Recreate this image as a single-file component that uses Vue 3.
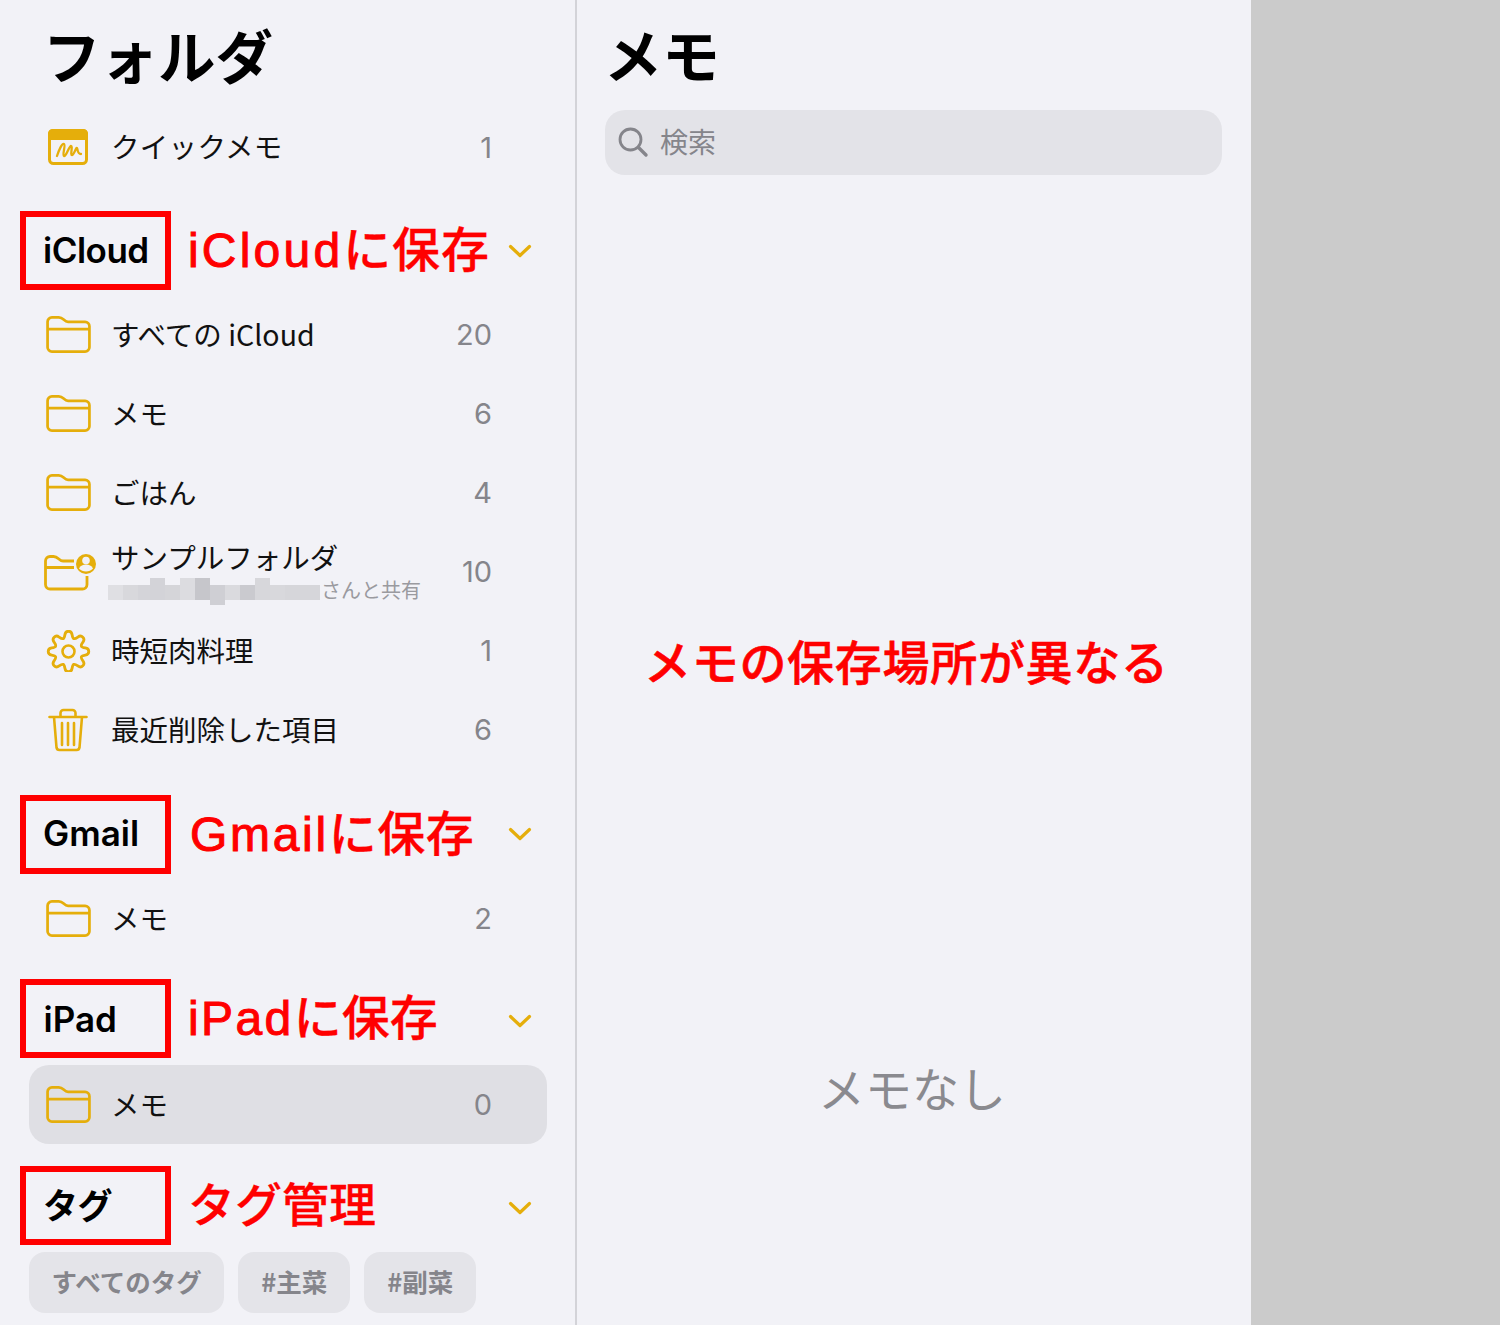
<script setup>
const mosaic = [
  [15,'#dfdfe3',0,0],[15,'#d8d8dc',0,0],[12,'#d4d4d9',0,0],[15,'#d3d3d8',7,0],[15,'#d5d5d9',0,0],[15,'#dcdce0',7,0],[15,'#c6c6cb',7,0],
  [15,'#cfcfd4',0,5],[15,'#dadade',0,0],[15,'#cacacf',0,0],[15,'#d7d7db',7,0],[15,'#d8d8dc',0,0],[15,'#d6d6da',0,0],[20,'#d6d6da',0,0]
]
const icloud = [
  { icon: 'folder', name: 'すべての iCloud', count: 20 },
  { icon: 'folder', name: 'メモ', count: 6 },
  { icon: 'folder', name: 'ごはん', count: 4 },
  { icon: 'shared', name: 'サンプルフォルダ', count: 10, sub: 'さんと共有' },
  { icon: 'gear', name: '時短肉料理', count: 1 },
  { icon: 'trash', name: '最近削除した項目', count: 6 }
]
const folderPath = 'M1.5 6A4.500 4.500 0 0 1 6 1.500h7c2.500 0 3.500.8 5 2.200 1.500 1.400 2.500 2.300 4.500 2.300H40a4.500 4.500 0 0 1 4.500 4.500V32a4.500 4.500 0 0 1-4.500 4.500H6A4.500 4.500 0 0 1 1.500 32zM1.500 13.500h43'

function gearPath() {
  const cx = 22.5, cy = 21.5, outer = 20.5, inner = 14
  const pts = []
  for (let i = 0; i < 8; i++) {
    const a = (i * Math.PI) / 4 - Math.PI / 2
    const steps = [[-0.3, inner], [-0.15, outer], [0.15, outer], [0.3, inner]]
    for (const [d, r] of steps) {
      pts.push([cx + r * Math.cos(a + d), cy + r * Math.sin(a + d)])
    }
  }
  const mid = (p, q) => [(p[0] + q[0]) / 2, (p[1] + q[1]) / 2]
  const f = (n) => n.toFixed(2)
  const start = mid(pts[pts.length - 1], pts[0])
  let d = `M${f(start[0])} ${f(start[1])}`
  pts.forEach((p, i) => {
    const m = mid(p, pts[(i + 1) % pts.length])
    d += `Q${f(p[0])} ${f(p[1])} ${f(m[0])} ${f(m[1])}`
  })
  return d + 'Z'
}
const gear = gearPath()
</script>

<template>
  <div class="screen">
    <aside class="sidebar">
      <h1 class="title">フォルダ</h1>
      <div class="row quick">
        <svg class="icon" viewBox="0 0 46 40" width="46" height="40">
          <rect x="3.500" y="2.500" width="37" height="33" rx="4" fill="none" stroke="#e5ae0b" stroke-width="3"/>
          <path d="M2 5.500A4.500 4.500 0 0 1 6.500 1h31A4.500 4.500 0 0 1 42 5.500V12H2z" fill="#e5ae0b"/>
          <path d="M11 28C13 22 16 15 18 16c2 1-2 11 0 12s5-10 7-10-1 9 1 9 4-8 5-7 0 6 4 6" fill="none" stroke="#e5ae0b" stroke-width="2.300" stroke-linecap="round" stroke-linejoin="round"/>
        </svg>
        <span class="name">クイックメモ</span>
        <span class="count">1</span>
      </div>

      <div class="section first">
        <div class="box">iCloud</div>
        <span class="note"><span class="latin">iCloud</span>に保存</span>
        <svg class="chev" viewBox="0 0 24 14" width="24" height="14"><path d="M2.5 2.5 12 11.5 21.500 2.500" fill="none" stroke="#e5ae0b" stroke-width="3.200" stroke-linecap="round" stroke-linejoin="round"/></svg>
      </div>
      <div class="rows">
        <div v-for="r in icloud" :key="r.name" class="row">
          <svg v-if="r.icon === 'folder'" class="icon folder" viewBox="0 0 46 38" width="45" height="37">
            <path :d="folderPath" fill="none" stroke="#e5ae0b" stroke-width="2.800" stroke-linejoin="round"/>
          </svg>
          <svg v-else-if="r.icon === 'shared'" class="icon shared" viewBox="0 0 54 40" width="54" height="40">
            <path d="M30 9H19c-2 0-3-.9-4.500-2.300C13 5.300 12 4.500 9.500 4.500H6A4.500 4.500 0 0 0 1.500 9v23.500A4.500 4.500 0 0 0 6 37h32.500a4.500 4.500 0 0 0 4.500-4.500V24M1.500 15.500H30" fill="none" stroke="#e5ae0b" stroke-width="2.800" stroke-linejoin="round"/>
            <circle cx="42" cy="12" r="10" fill="#e5ae0b"/>
            <circle cx="42" cy="8.500" r="3.800" fill="#f2f2f7"/>
            <path d="M35 16.500c1.500-3 4-4 7-4s5.500 1 7 4c-1.700 2-4.300 3-7 3s-5.300-1-7-3z" fill="#f2f2f7"/>
          </svg>
          <svg v-else-if="r.icon === 'gear'" class="icon" viewBox="0 0 46 42" width="46" height="42">
            <path :d="gear" fill="none" stroke="#e5ae0b" stroke-width="2.800" stroke-linejoin="round"/>
            <circle cx="22.500" cy="21.500" r="6" fill="none" stroke="#e5ae0b" stroke-width="2.600"/>
          </svg>
          <svg v-else class="icon" viewBox="0 0 46 44" width="46" height="44">
            <path d="M3.500 9h37M14.500 9V5a3 3 0 0 1 3-3h9a3 3 0 0 1 3 3v4M8 9l2.500 30.500a3 3 0 0 0 3 2.500h17a3 3 0 0 0 3-2.500L36 9M16 15v22M22 15v22M28 15v22" fill="none" stroke="#e5ae0b" stroke-width="2.600" stroke-linecap="round" stroke-linejoin="round"/>
          </svg>
          <div v-if="r.sub" class="stack">
            <span class="name">{{ r.name }}</span>
            <span class="subline">
              <span class="mosaic">
                <i v-for="(m, i) in mosaic" :key="i" :style="{ width: m[0] + 'px', background: m[1], marginTop: -m[2] + 'px', marginBottom: -m[3] + 'px' }"></i>
              </span>
              <span class="sub">{{ r.sub }}</span>
            </span>
          </div>
          <span v-else class="name">{{ r.name }}</span>
          <span class="count">{{ r.count }}</span>
        </div>
      </div>

      <div class="section gmail">
        <div class="box">Gmail</div>
        <span class="note wide"><span class="latin">Gmail</span>に保存</span>
        <svg class="chev" viewBox="0 0 24 14" width="24" height="14"><path d="M2.5 2.5 12 11.5 21.500 2.500" fill="none" stroke="#e5ae0b" stroke-width="3.200" stroke-linecap="round" stroke-linejoin="round"/></svg>
      </div>
      <div class="row">
        <svg class="icon folder" viewBox="0 0 46 38" width="45" height="37">
          <path :d="folderPath" fill="none" stroke="#e5ae0b" stroke-width="2.800" stroke-linejoin="round"/>
        </svg>
        <span class="name">メモ</span>
        <span class="count">2</span>
      </div>

      <div class="section ipad">
        <div class="box">iPad</div>
        <span class="note"><span class="latin">iPad</span>に保存</span>
        <svg class="chev" viewBox="0 0 24 14" width="24" height="14"><path d="M2.5 2.5 12 11.5 21.500 2.500" fill="none" stroke="#e5ae0b" stroke-width="3.200" stroke-linecap="round" stroke-linejoin="round"/></svg>
      </div>
      <div class="row selected">
        <svg class="icon folder" viewBox="0 0 46 38" width="45" height="37">
          <path :d="folderPath" fill="none" stroke="#e5ae0b" stroke-width="2.800" stroke-linejoin="round"/>
        </svg>
        <span class="name">メモ</span>
        <span class="count">0</span>
      </div>

      <div class="section tag">
        <div class="box">タグ</div>
        <span class="note tagnote">タグ管理</span>
        <svg class="chev" viewBox="0 0 24 14" width="24" height="14"><path d="M2.5 2.5 12 11.5 21.500 2.500" fill="none" stroke="#e5ae0b" stroke-width="3.200" stroke-linecap="round" stroke-linejoin="round"/></svg>
      </div>
      <div class="tags">
        <span class="chip">すべてのタグ</span>
        <span class="chip">#主菜</span>
        <span class="chip">#副菜</span>
      </div>
    </aside>

    <main class="notes">
      <h2 class="heading">メモ</h2>
      <div class="search">
        <svg viewBox="0 0 32 32" width="32" height="32"><circle cx="13.500" cy="13.500" r="10.500" fill="none" stroke="#85858b" stroke-width="2.800"/><path d="M21.500 21.500 29 29" stroke="#85858b" stroke-width="3.400" stroke-linecap="round"/></svg>
        <span class="hint">検索</span>
      </div>
      <p class="diff">メモの保存場所が異なる</p>
      <p class="empty">メモなし</p>
    </main>

    <div class="rest"></div>
  </div>
</template>

<style scoped>
.screen {
  display: flex;
  width: 1500px;
  height: 1325px;
  overflow: hidden;
  background: #f2f2f7;
  font-family: "Inter", "Noto Sans CJK JP", sans-serif;
  color: #000;
}
.sidebar {
  width: 575px;
  height: 1325px;
  flex: none;
  display: flex;
  flex-direction: column;
  overflow: hidden;
}
.title {
  margin: 0;
  height: 108px;
  padding: 12px 0 0 43px;
  box-sizing: border-box;
  font: 700 57.500px/84px "Noto Sans CJK JP", sans-serif;
}
.rows {
  display: flex;
  flex-direction: column;
}
.row {
  height: 79px;
  flex: none;
  display: flex;
  align-items: center;
  margin: 0 28px 0 29px;
  padding: 0 55px 0 17px;
  box-sizing: border-box;
}
.icon {
  flex: none;
  width: 46px;
  margin-right: 19px;
}
.icon.folder {
  width: 45px;
  margin-right: 20px;
}
.icon.shared {
  width: 54px;
  margin-left: -2px;
  margin-right: 13px;
  overflow: visible;
}
.name {
  flex: 1;
  margin-top: -2px;
  font: 400 28.500px/36px "Noto Sans CJK JP", sans-serif;
  color: #111;
  white-space: nowrap;
}
.quick .name {
  margin-top: -3px;
  letter-spacing: 0.3px;
}
.count {
  font: 400 29px/36px "Inter", sans-serif;
  color: #85858b;
}
.stack {
  flex: 1;
  display: flex;
  flex-direction: column;
  margin-top: -3px;
}
.stack .name {
  flex: none;
  margin-top: 0;
  line-height: 36px;
}
.subline {
  display: flex;
  align-items: center;
  margin: 3px 0 0 -3px;
  height: 24px;
}
.mosaic {
  display: flex;
  width: 212px;
  height: 15px;
  flex: none;
  margin-top: 5px;
}
.mosaic i {
  display: block;
}
.sub {
  margin-left: 1px;
  font: 400 20px/24px "Noto Sans CJK JP", sans-serif;
  color: #9a9a9f;
  white-space: nowrap;
}
.section {
  height: 79px;
  flex: none;
  display: flex;
  align-items: center;
  margin-left: 20px;
}
.section.first { margin-top: 24px; margin-bottom: 5px; }
.section.gmail { margin-top: 26px; margin-bottom: 5px; }
.section.ipad { margin-top: 21px; margin-bottom: 7px; }
.section.tag { margin-top: 22px; margin-bottom: 7px; }
.box {
  width: 151px;
  height: 79px;
  flex: none;
  box-sizing: border-box;
  border: 6px solid #ff0000;
  padding-left: 17px;
  display: flex;
  align-items: center;
  font: 600 35px/1 "Inter", "Noto Sans CJK JP", sans-serif;
  letter-spacing: -0.5px;
}
.gmail .box { padding-bottom: 3px; letter-spacing: 0; }
.ipad .box { padding: 2px 0 0 17.500px; letter-spacing: 0; }
.tag .box { padding-top: 2px; }
.note {
  margin: 0 0 4px 17px;
  color: #ff0000;
  font: 500 48px/1 "Noto Sans CJK JP", sans-serif;
  letter-spacing: 0.5px;
  white-space: nowrap;
  -webkit-text-stroke: 0.3px #ff0000;
}
.first .note { letter-spacing: 0.8px; }
.ipad .note { letter-spacing: 0; }
.note.wide { margin-left: 19px; }
.note.tagnote {
  margin: 0 0 8px 17px;
  font-size: 47px;
  letter-spacing: 0;
}
.latin {
  font-family: "Liberation Sans", sans-serif;
  font-weight: 400;
  letter-spacing: 2.700px;
  -webkit-text-stroke: 1px #ff0000;
}
.first .latin { letter-spacing: 3.200px; }
.ipad .latin { letter-spacing: 2.400px; }
.chev {
  flex: none;
  margin-left: auto;
  margin-right: 43px;
  margin-top: 1px;
}
.gmail .chev { margin-top: 0; margin-bottom: 1px; }
.ipad .chev, .tag .chev { margin-top: 5px; }
.selected {
  background: #dfdfe4;
  border-radius: 20px;
}
.tags {
  display: flex;
  gap: 14px;
  margin-left: 29px;
}
.chip {
  height: 61px;
  padding: 0 22.500px 3px;
  box-sizing: border-box;
  border-radius: 16px;
  background: #e4e4e9;
  color: #85858b;
  display: flex;
  align-items: center;
  font: 700 25.500px/1 "Noto Sans CJK JP", sans-serif;
}
.chip + .chip {
  min-width: 112px;
  justify-content: center;
}
.notes {
  width: 676px;
  height: 1325px;
  flex: none;
  box-sizing: border-box;
  border-left: 2px solid #d3d3d8;
  display: flex;
  flex-direction: column;
}
.heading {
  margin: 0;
  height: 110px;
  padding: 11px 0 0 27px;
  box-sizing: border-box;
  font: 700 58px/84px "Noto Sans CJK JP", sans-serif;
}
.search {
  height: 65px;
  margin: 0 29px 0 28px;
  border-radius: 20px;
  background: #e3e3e8;
  display: flex;
  align-items: center;
  gap: 11px;
  padding-left: 12px;
  color: #85858b;
  font: 400 28px/1 "Noto Sans CJK JP", sans-serif;
}
.search svg { margin-bottom: 2px; }
.hint { margin-bottom: 4px; }
.diff {
  margin: 449px 0 0 67px;
  height: 72px;
  color: #ff0000;
  font: 500 47px/72px "Noto Sans CJK JP", sans-serif;
  letter-spacing: 0.700px;
  -webkit-text-stroke: 0.6px #ff0000;
  white-space: nowrap;
}
.empty {
  margin: 355px 0 0;
  padding-right: 4px;
  text-align: center;
  color: #8a8a8f;
  font: 400 47px/72px "Noto Sans CJK JP", sans-serif;
}
.rest {
  flex: 1;
  background: #cbcbcb;
}
</style>
